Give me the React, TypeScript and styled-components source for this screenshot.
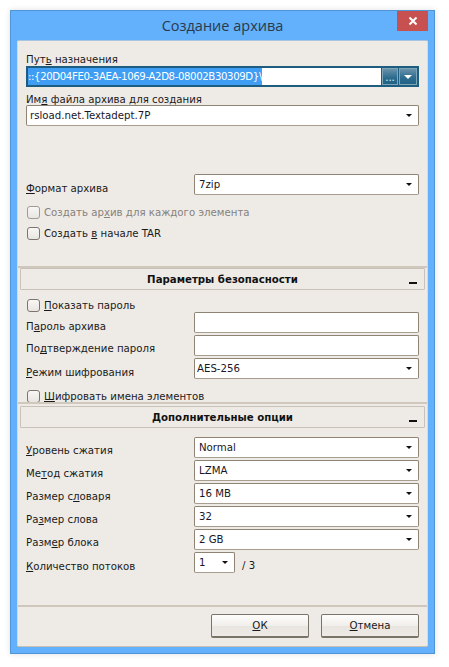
import React from 'react';
import styled, { createGlobalStyle } from 'styled-components';

const Global = createGlobalStyle`
  html, body { margin: 0; padding: 0; background: #fff; }
  body { font-family: "DejaVu Sans", sans-serif; font-size: 10.2px; color: #1a1a1a; }
`;

const Page = styled.div`
  width: 449px;
  height: 667px;
  padding: 10px 0 0 10px;
  box-sizing: border-box;
  overflow: hidden;
`;
const Win = styled.div`
  width: 425px;
  height: 644px;
  box-sizing: border-box;
  background: #63b0fc;
  border: 1px solid #4f94d4;
  box-shadow: 0 0 6px rgba(0,0,0,.12);
  display: flex;
  flex-direction: column;
  padding: 0 6px 6px;
`;
const TitleBar = styled.div`
  height: 29px;
  flex: none;
  position: relative;
  display: flex;
  align-items: center;
  justify-content: center;
  font-family: "Open Sans", "Noto Sans", sans-serif;
  font-size: 14.5px;
  color: #2a3a4a;
`;
const Close = styled.div`
  position: absolute;
  right: 0;
  top: 0;
  width: 31px;
  height: 20px;
  background: #c75050;
  display: flex;
  align-items: center;
  justify-content: center;
`;
const Client = styled.div`
  flex: 1;
  background: #eeebe7;
  border: 1px solid;
  border-color: #a9c4de #dcd8d2 #c9c0b4 #dcd8d2;
  border-radius: 2px;
  display: flex;
  flex-direction: column;
  min-height: 0;
`;
const Top = styled.div`
  padding: 0 8px;
  height: 225px;
  flex: none;
  display: flex;
  flex-direction: column;
`;
const FieldLabel = styled.div<{ $mt: number; $h: number }>`
  margin-top: ${p => p.$mt}px;
  height: ${p => p.$h}px;
  line-height: 14px;
  white-space: nowrap;
`;
const PathField = styled.div`
  height: 21px;
  flex: none;
  box-sizing: border-box;
  border: 2px solid #1c5d80;
  background: #1c5d80;
  display: flex;
  gap: 1px;
`;
const PathInput = styled.div`
  flex: 1;
  background: #fff;
  display: flex;
  align-items: center;
`;
const Selected = styled.span`
  background: #3f9df3;
  color: #fff;
  line-height: 17px;
  white-space: nowrap;
  letter-spacing: -0.4px;
`;
const PathBtn = styled.div<{ $w: number }>`
  width: ${p => p.$w}px;
  background: linear-gradient(#6f97ad, #2f6d8f 55%, #1f6085);
  box-shadow: inset 0 0 0 1px #7fa5b8;
  display: flex;
  align-items: center;
  justify-content: center;
`;
const Dots = styled.span`
  color: #e8f4f4;
  font-size: 10px;
  line-height: 1;
  padding-top: 2px;
`;
const Field = styled.div<{ $w?: number; $mt?: number; $grow?: boolean }>`
  height: 21px;
  box-sizing: border-box;
  width: ${p => (p.$w ? `${p.$w}px` : 'auto')};
  margin-top: ${p => p.$mt ?? 0}px;
  flex: ${p => (p.$grow ? '1' : 'none')};
  background: #fff;
  border: 1px solid #8f8474;
  border-bottom-color: #a89e90;
  border-radius: 2px;
  display: flex;
  align-items: center;
  padding: 0 0 0 2px;
  white-space: nowrap;
`;
const ComboText = styled.span<{ $pl?: number }>`
  flex: 1;
  padding-left: ${p => p.$pl ?? 0}px;
  color: #1a1626;
`;
const Arrow = styled.i`
  flex: none;
  width: 0;
  height: 0;
  margin: 0 6px 0 0;
  border-left: 3px solid transparent;
  border-right: 3px solid transparent;
  border-top: 3.5px solid #111;
`;
const Row = styled.div<{ $mt?: number; $h?: number }>`
  display: flex;
  flex: none;
  align-items: center;
  margin-top: ${p => p.$mt ?? 0}px;
  height: ${p => p.$h ?? 21}px;
`;
const RowLabel = styled.div<{ $dy?: number }>`
  width: 168px;
  flex: none;
  white-space: nowrap;
  padding-top: ${p => p.$dy ?? 6}px;
`;
const Check = styled.div<{ $off?: boolean }>`
  display: flex;
  align-items: center;
  gap: 4px;
  height: 14px;
  margin-left: 1px;
  white-space: nowrap;
  color: ${p => (p.$off ? '#86827c' : '#1a1a1a')};
`;
const CheckText = styled.span``;
const Box = styled.i<{ $off?: boolean }>`
  width: 13px;
  height: 13px;
  box-sizing: border-box;
  flex: none;
  border: 1px solid ${p => (p.$off ? '#a09a92' : '#7d766c')};
  border-radius: 3px;
  background: linear-gradient(#f8f7f5, #e9e6e1);
`;
const HeadWrap = styled.div<{ $gap: number }>`
  flex: none;
  border-top: 2px solid #d0c8bd;
  padding: ${p => p.$gap}px 2px 0;
`;
const SectionHead = styled.div`
  height: 22px;
  box-sizing: border-box;
  border: 1px solid #c8c2b8;
  border-radius: 1px;
  display: flex;
  align-items: center;
  justify-content: center;
  position: relative;
  font-weight: bold;
  color: #111;
`;
const Minus = styled.i`
  position: absolute;
  right: 7px;
  bottom: 5px;
  width: 8px;
  height: 2px;
  background: #111;
`;
const Section = styled.div<{ $h?: number }>`
  padding: 0 8px;
  height: ${p => (p.$h ? `${p.$h}px` : 'auto')};
  flex: ${p => (p.$h ? 'none' : '1')};
  display: flex;
  flex-direction: column;
`;
const Footer = styled.div`
  flex: none;
  height: 41px;
  box-sizing: border-box;
  border-top: 2px solid #cfc7bc;
  padding: 7px 8px 0;
  display: flex;
  justify-content: flex-end;
  gap: 12px;
`;
const Button = styled.div`
  width: 98px;
  height: 24px;
  box-sizing: border-box;
  border: 1px solid #7a7368;
  border-bottom-width: 2px;
  border-radius: 2px;
  background: linear-gradient(#fdfdfc, #f1efec 50%, #e8e5e0 54%, #eeebe7);
  display: flex;
  align-items: center;
  justify-content: center;
`;
const U = styled.span`
  text-decoration: underline;
`;
const Suffix = styled.span`
  margin-left: 7px;
  padding-top: 5px;
`;

function Combo({ text, pl, w, mt, grow }: { text: string; pl?: number; w?: number; mt?: number; grow?: boolean }) {
  return (
    <Field $w={w} $mt={mt} $grow={grow}>
      <ComboText $pl={pl}>{text}</ComboText>
      <Arrow />
    </Field>
  );
}

const rows: [React.ReactNode, string][] = [
  [<><U>У</U>ровень сжатия</>, 'Normal'],
  [<>Ме<U>т</U>од сжатия</>, 'LZMA'],
  [<>Размер с<U>л</U>оваря</>, '16 MB'],
  [<>Ра<U>з</U>мер слова</>, '32'],
  [<>Разм<U>е</U>р блока</>, '2 GB'],
];

export default function App() {
  return (
    <Page>
      <Global />
      <Win>
        <TitleBar>
          Создание архива
          <Close>
            <svg width="10" height="10" viewBox="0 0 10 10">
              <path d="M1.5 1.5 8.5 8.5M8.5 1.5 1.5 8.5" stroke="#fff" strokeWidth="2" />
            </svg>
          </Close>
        </TitleBar>
        <Client>
          <Top>
            <FieldLabel $mt={12} $h={13}>Пут<U>ь</U> назначения</FieldLabel>
            <PathField>
              <PathInput>
                <Selected>::{'{'}20D04FE0-3AEA-1069-A2D8-08002B30309D{'}'}\</Selected>
              </PathInput>
              <PathBtn $w={16}><Dots>...</Dots></PathBtn>
              <PathBtn $w={18}>
                <svg width="8" height="4" viewBox="0 0 8 4"><path d="M0 0h8L4 4z" fill="#fff" /></svg>
              </PathBtn>
            </PathField>
            <FieldLabel $mt={6} $h={12}>Им<U>я</U> файла архива для создания</FieldLabel>
            <Combo text="rsload.net.Textadept.7P" pl={1} />
            <Row $mt={48}>
              <RowLabel $dy={8}><U>Ф</U>ормат архива</RowLabel>
              <Combo text="7zip" pl={2} grow />
            </Row>
            <Row $mt={10} $h={14}>
              <Check $off><Box $off /><CheckText>Создать ар<U>х</U>ив для каждого элемента</CheckText></Check>
            </Row>
            <Row $mt={7} $h={14}>
              <Check><Box /><CheckText>Создать <U>в</U> начале TAR</CheckText></Check>
            </Row>
          </Top>
          <HeadWrap $gap={0}>
            <SectionHead>
              Параметры безопасности
              <Minus />
            </SectionHead>
          </HeadWrap>
          <Section $h={112}>
            <Row $mt={8} $h={15}>
              <Check><Box /><CheckText><U>П</U>оказать пароль</CheckText></Check>
            </Row>
            <Row $mt={-1}>
              <RowLabel $dy={8}>П<U>а</U>роль архива</RowLabel>
              <Field $grow />
            </Row>
            <Row $mt={2}>
              <RowLabel $dy={6}>По<U>д</U>тверждение пароля</RowLabel>
              <Field $grow />
            </Row>
            <Row $mt={2}>
              <RowLabel $dy={8}><U>Р</U>ежим шифрования</RowLabel>
              <Combo text="AES-256" grow />
            </Row>
            <Row $mt={10} $h={14}>
              <Check><Box /><CheckText><U>Ш</U>ифровать имена элементов</CheckText></Check>
            </Row>
          </Section>
          <HeadWrap $gap={2}>
            <SectionHead>
              Дополнительные опции
              <Minus />
            </SectionHead>
          </HeadWrap>
          <Section>
            {rows.map(([label, value], i) => (
              <Row key={i} $mt={i === 0 ? 9 : 2}>
                <RowLabel>{label}</RowLabel>
                <Combo text={value} pl={2} grow />
              </Row>
            ))}
            <Row $mt={2}>
              <RowLabel $dy={8}><U>К</U>оличество потоков</RowLabel>
              <Combo text="1" pl={2} w={41} />
              <Suffix>/ 3</Suffix>
            </Row>
          </Section>
          <Footer>
            <Button><U>О</U>К</Button>
            <Button><U>О</U>тмена</Button>
          </Footer>
        </Client>
      </Win>
    </Page>
  );
}
